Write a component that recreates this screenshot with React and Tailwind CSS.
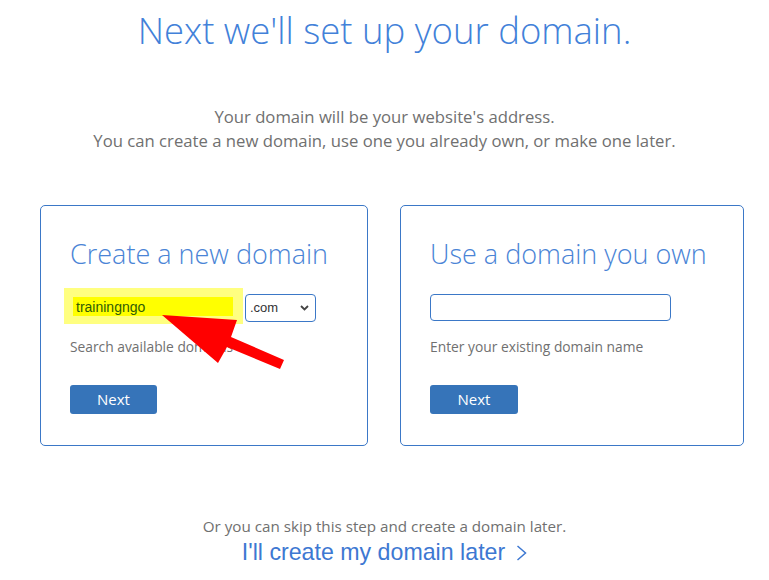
export default function App() {
  return (
    <div className="relative w-[769px] h-[580px] bg-white overflow-hidden font-['Open_Sans',sans-serif]">
      <div className="flex flex-col items-center pt-[8px]">
        <h1 className="text-[36.5px] leading-[44px] font-light text-[#4281d9]">
          Next we'll set up your domain.
        </h1>
        <div className="mt-[53px] text-center text-[16.7px] leading-[24px] text-[#707070]">
          <p>Your domain will be your website's address.</p>
          <p>You can create a new domain, use one you already own, or make one later.</p>
        </div>
      </div>

      <div className="flex gap-[32px] pl-[40px] mt-[52px]">
        <div className="w-[328px] h-[241px] border border-[#3b78c7] rounded-[5px] px-[29px] pt-[32px]">
          <h2 className="text-[27px] leading-[32px] font-light text-[#4a84d6] whitespace-nowrap">
            Create a new domain
          </h2>
          <div className="flex items-start h-[28px] mt-[24px]">
            <div className="w-[179px] h-[36px] -mt-[6px] -ml-[6px] bg-[#ffff80] pl-[9px] pr-[10px] pt-[9px]">
              <div className="h-[19px] bg-[#ffff00] pl-[3px] pt-[1px] text-[14px] leading-[19px] text-[#2f5c06] font-['Liberation_Sans',Arial,sans-serif]">
                trainingngo
              </div>
            </div>
            <div className="ml-[2px] w-[71px] h-[28px] border border-[#3b78c7] rounded-[4px] flex items-center justify-between pl-[4px] pr-[6px] text-[13px] text-[#333] font-['Liberation_Sans',Arial,sans-serif]">
              <span>.com</span>
              <svg width="9" height="6" viewBox="0 0 9 6" fill="none">
                <path d="M1 1l3.5 3.5L8 1" stroke="#444" strokeWidth="1.8" />
              </svg>
            </div>
          </div>
          <p className="mt-[15px] text-[13.8px] leading-[20px] text-[#707070]">Search available domains</p>
          <button className="mt-[28px] w-[87px] h-[29px] rounded-[3px] bg-[#3674b9] text-white text-[15px]">
            Next
          </button>
        </div>

        <div className="w-[344px] h-[241px] border border-[#3b78c7] rounded-[5px] px-[29px] pt-[32px]">
          <h2 className="text-[27px] leading-[32px] font-light text-[#4a84d6] whitespace-nowrap">
            Use a domain you own
          </h2>
          <div className="h-[28px] mt-[24px]">
            <div className="w-[241px] h-[27px] border border-[#3b78c7] rounded-[4px]" />
          </div>
          <p className="mt-[15px] text-[13.8px] leading-[20px] text-[#707070]">Enter your existing domain name</p>
          <button className="mt-[28px] w-[88px] h-[29px] rounded-[3px] bg-[#3674b9] text-white text-[15px]">
            Next
          </button>
        </div>
      </div>

      <div className="flex flex-col items-center mt-[70px]">
        <p className="text-[15.2px] leading-[20px] text-[#707070]">
          Or you can skip this step and create a domain later.
        </p>
        <a className="mt-[2px] flex items-center gap-[11px] text-[23.2px] leading-[28px] text-[#3d78d2] font-['Liberation_Sans',Arial,sans-serif]">
          <span>I'll create my domain later</span>
          <svg width="11" height="16" viewBox="0 0 11 16" fill="none" className="mt-[2px]">
            <path d="M1.5 1l8 7-8 7" stroke="#3d78d2" strokeWidth="1.5" />
          </svg>
        </a>
      </div>

      <svg className="absolute left-0 top-0 pointer-events-none" width="769" height="580">
        <polygon points="162,315 237,320 231,337 284,360 280,369 227,347 218,363" fill="#ff0000" />
      </svg>
    </div>
  );
}
